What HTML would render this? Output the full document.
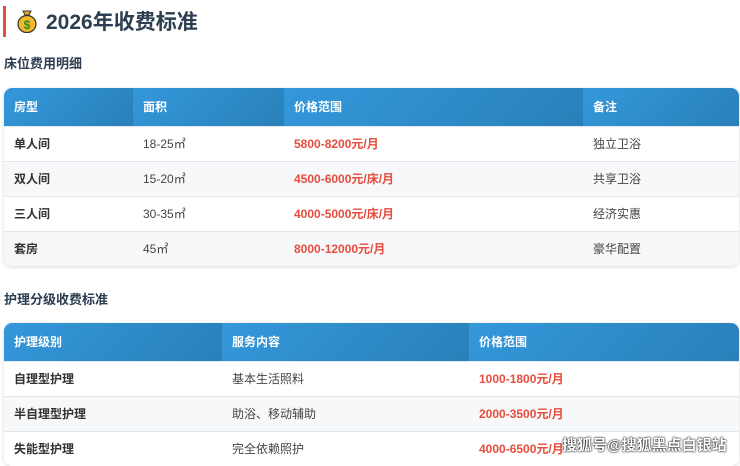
<!DOCTYPE html>
<html><head><meta charset="utf-8"><style>
*{margin:0;padding:0;box-sizing:border-box}
body{width:740px;height:463px;overflow:hidden;background:#fff;font-family:"Liberation Sans","Noto Sans CJK SC",sans-serif;color:#333;position:relative}
.bar{position:absolute;left:3px;top:6px;width:3px;height:31px;background:#e74c3c}
.title{position:absolute;left:16px;top:7px;font-size:21px;font-weight:bold;color:#2c3e50;display:flex;align-items:center;height:28px}
.sub{position:absolute;left:4px;font-size:13px;font-weight:bold;color:#2c3e50}
table{position:absolute;left:4px;width:735px;border-collapse:collapse;font-size:12px;border-radius:8px;overflow:hidden;box-shadow:0 1px 4px rgba(0,0,0,.15)}
th{height:38px;color:#fff;text-align:left;padding-left:10px;font-weight:bold;background:linear-gradient(135deg,#3498db,#2980b9)}
td{height:35px;padding-left:10px;border-top:1px solid #e3e6ea;color:#444}
tr:nth-child(odd) td{background:#f7f8fa}
td.b{font-weight:bold;color:#333}
td.p{font-weight:bold;color:#e74c3c}
.wm{position:absolute;left:562px;top:434px;font-size:15px;color:#fff;font-weight:bold;text-shadow:0 0 2px #000,0 0 1px #000}
</style></head><body>
<div class="bar"></div>
<div class="title"><span style="display:inline-block;width:22px;height:24px;margin-right:8px;position:relative"><svg width="22" height="24" viewBox="0 0 22 24"><path d="M7 2h8l-2 4h-4z" fill="#e5a51a" stroke="#333" stroke-width="1"/><ellipse cx="11" cy="15" rx="9" ry="8.5" fill="#f3b72a" stroke="#333" stroke-width="1.2"/><text x="11" y="20" font-size="12" text-anchor="middle" fill="#2a8a2a" font-weight="bold" font-family="Liberation Sans">$</text></svg></span>2026年收费标准</div>
<div class="sub" style="top:53px">床位费用明细</div>
<table style="top:88px">
<tr><th style="width:129px">房型</th><th style="width:151px">面积</th><th style="width:299px">价格范围</th><th>备注</th></tr>
<tr><td class="b">单人间</td><td>18-25㎡</td><td class="p">5800-8200元/月</td><td>独立卫浴</td></tr>
<tr><td class="b">双人间</td><td>15-20㎡</td><td class="p">4500-6000元/床/月</td><td>共享卫浴</td></tr>
<tr><td class="b">三人间</td><td>30-35㎡</td><td class="p">4000-5000元/床/月</td><td>经济实惠</td></tr>
<tr><td class="b">套房</td><td>45㎡</td><td class="p">8000-12000元/月</td><td>豪华配置</td></tr>
</table>
<div class="sub" style="top:289px">护理分级收费标准</div>
<table style="top:323px">
<tr><th style="width:218px">护理级别</th><th style="width:247px">服务内容</th><th>价格范围</th></tr>
<tr><td class="b">自理型护理</td><td>基本生活照料</td><td class="p">1000-1800元/月</td></tr>
<tr><td class="b">半自理型护理</td><td>助浴、移动辅助</td><td class="p">2000-3500元/月</td></tr>
<tr><td class="b">失能型护理</td><td>完全依赖照护</td><td class="p">4000-6500元/月</td></tr>
</table>
<div class="wm">搜狐号@搜狐黑点白银站</div>
</body></html>
